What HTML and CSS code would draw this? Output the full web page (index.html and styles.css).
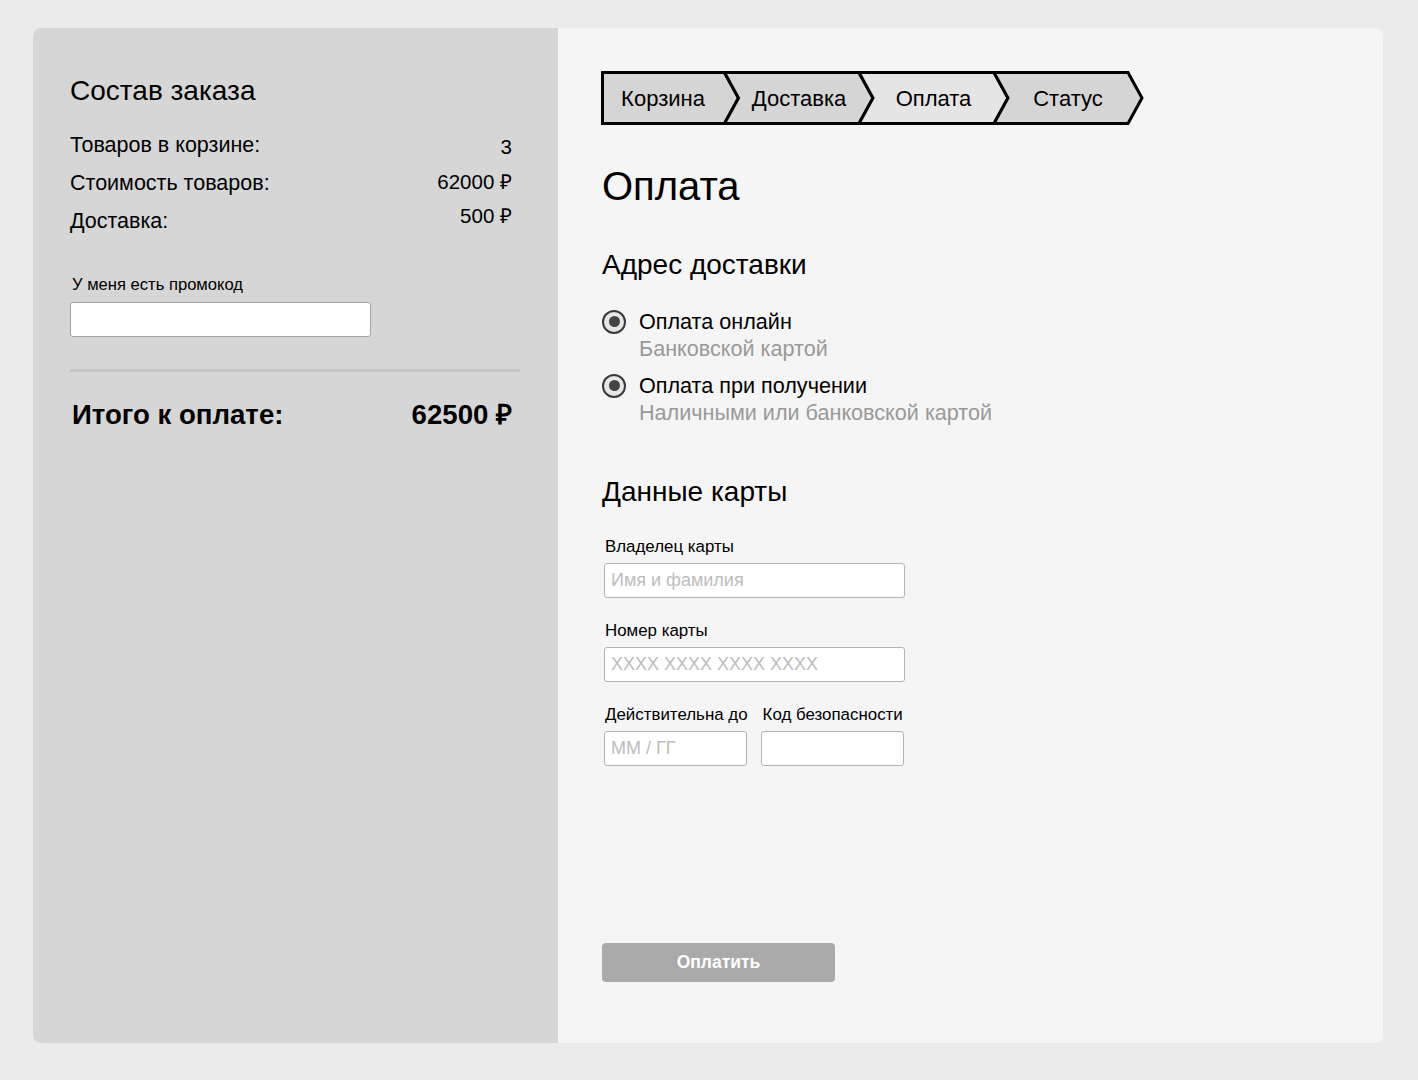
FILE: index.html
```html
<!DOCTYPE html>
<html lang="ru">
<head>
<meta charset="utf-8">
<title>Оплата</title>
<link rel="stylesheet" href="styles.css">
</head>
<body>
<div class="card">
  <aside class="summary">
    <h2 class="summary-title">Состав заказа</h2>
    <div class="summary-list">
      <div class="summary-labels">
        <div>Товаров в корзине:</div>
        <div>Стоимость товаров:</div>
        <div>Доставка:</div>
      </div>
      <div class="summary-values">
        <div>3</div>
        <div>62000 ₽</div>
        <div>500 ₽</div>
      </div>
    </div>
    <label class="promo-label">У меня есть промокод</label>
    <input class="input promo-input" type="text">
    <div class="divider"></div>
    <div class="total">
      <span>Итого к оплате:</span>
      <span>62500 ₽</span>
    </div>
  </aside>
  <main class="content">
    <svg class="steps" width="546" height="56" viewBox="0 0 546 56">
      <g stroke="#000" stroke-width="3" stroke-linejoin="miter">
        <polygon fill="#d5d5d5" points="2.5,2.5 124.5,2.5 138.5,28 124.5,53.5 2.5,53.5"/>
        <polygon fill="#d5d5d5" points="124.5,2.5 259,2.5 273,28 259,53.5 124.5,53.5 138.5,28"/>
        <polygon fill="#e5e5e5" points="259,2.5 394,2.5 408,28 394,53.5 259,53.5 273,28"/>
        <polygon fill="#d5d5d5" points="394,2.5 528,2.5 542,28 528,53.5 394,53.5 408,28"/>
      </g>
      <g class="steps-text" text-anchor="middle">
        <text x="63" y="35.5">Корзина</text>
        <text x="199" y="35.5">Доставка</text>
        <text x="333.5" y="35.5">Оплата</text>
        <text x="468" y="35.5">Статус</text>
      </g>
    </svg>
    <h1 class="page-title">Оплата</h1>
    <h2 class="section-title">Адрес доставки</h2>
    <div class="options">
      <div class="option">
        <span class="radio"></span>
        <div class="option-text">
          <div class="option-name">Оплата онлайн</div>
          <div class="option-sub">Банковской картой</div>
        </div>
      </div>
      <div class="option">
        <span class="radio"></span>
        <div class="option-text">
          <div class="option-name">Оплата при получении</div>
          <div class="option-sub">Наличными или банковской картой</div>
        </div>
      </div>
    </div>
    <h2 class="section-title card-title">Данные карты</h2>
    <div class="field">
      <label class="field-label">Владелец карты</label>
      <input class="input wide" type="text" placeholder="Имя и фамилия">
    </div>
    <div class="field">
      <label class="field-label">Номер карты</label>
      <input class="input wide" type="text" placeholder="XXXX XXXX XXXX XXXX">
    </div>
    <div class="field-row">
      <div class="field">
        <label class="field-label">Действительна до</label>
        <input class="input short" type="text" placeholder="ММ / ГГ">
      </div>
      <div class="field">
        <label class="field-label">Код безопасности</label>
        <input class="input short" type="text">
      </div>
    </div>
    <button class="pay">Оплатить</button>
  </main>
</div>
</body>
</html>
```

FILE: styles.css
```css
* { box-sizing: border-box; }
html, body { margin: 0; padding: 0; }
body {
  background: #ebebeb;
  font-family: "Liberation Sans", Arial, sans-serif;
  color: #000;
  padding: 28px 35px 37px 33px;
}
.card {
  display: flex;
  height: 1015px;
  border-radius: 8px;
  overflow: hidden;
  background: #f5f5f5;
}
.summary {
  width: 525px;
  flex: none;
  background: #d6d6d6;
  padding: 48px 46px 0 37px;
  display: flex;
  flex-direction: column;
  align-items: flex-start;
}
.summary-title {
  margin: 0;
  font-size: 28px;
  font-weight: normal;
  line-height: 30px;
}
.summary-list {
  margin-top: 20px;
  width: 100%;
  display: flex;
  justify-content: space-between;
  font-size: 21.5px;
}
.summary-labels { line-height: 38px; }
.summary-values { line-height: 34.5px; padding-top: 4px; text-align: right; font-size: 20.5px; }
.promo-label {
  margin-top: 35px;
  margin-left: 2px;
  font-size: 16.6px;
  line-height: 20px;
}
.input {
  display: block;
  height: 35px;
  background: #fff;
  border: 1px solid #b3b3b3;
  border-radius: 3px;
  font-family: "Liberation Sans", Arial, sans-serif;
  font-size: 18px;
  padding: 0 6px;
  outline: none;
}
.input::placeholder { color: #bdbdbd; }
.promo-input {
  margin-top: 7px;
  width: 301px;
  border-color: #a5a5a5;
}
.divider {
  margin-top: 32px;
  width: calc(100% + 8px);
  height: 3px;
  background: #c3c3c3;
}
.total {
  margin-top: 26px;
  width: 100%;
  display: flex;
  justify-content: space-between;
  font-size: 27.6px;
  font-weight: bold;
  line-height: 34px;
  padding-left: 2px;
}
.content {
  flex: 1;
  padding: 42px 0 61px 43px;
  display: flex;
  flex-direction: column;
  align-items: flex-start;
}
.steps { display: block; margin-left: -1px; }
.steps-text {
  font-family: "Liberation Sans", Arial, sans-serif;
  font-size: 22px;
  fill: #000;
}
.page-title {
  margin: 37px 0 0 1px;
  font-size: 40px;
  font-weight: normal;
  line-height: 46px;
}
.section-title {
  margin: 41px 0 0 1px;
  font-size: 28px;
  font-weight: normal;
  line-height: 30px;
}
.options {
  margin-top: 28px;
  display: flex;
  flex-direction: column;
  gap: 10px;
}
.option {
  display: flex;
  align-items: flex-start;
  gap: 13px;
}
.radio {
  flex: none;
  width: 24px;
  height: 24px;
  margin-top: 1.5px;
  margin-left: 1px;
  border-radius: 50%;
  border: 2px solid #3a3a3a;
  background: #e6e6e6;
  display: flex;
  align-items: center;
  justify-content: center;
}
.radio::after {
  content: "";
  width: 11px;
  height: 11px;
  border-radius: 50%;
  background: #444;
}
.option-text { font-size: 21.6px; line-height: 27px; }
.option-sub { color: #999; }
.card-title { margin-top: 51px; }
.field {
  display: flex;
  flex-direction: column;
  align-items: flex-start;
  margin-top: 23px;
}
.card-title + .field { margin-top: 30px; }
.field-label {
  margin-left: 4px;
  font-size: 16.9px;
  line-height: 20px;
  margin-bottom: 6px;
}
.wide { width: 301px; margin-left: 3px; }
.field-row { display: flex; gap: 13px; }
.short { width: 143px; margin-left: 3px; }
.field-row .field + .field .short { margin-left: 0; }
.field-row .field + .field .field-label { margin-left: 2px; }
.pay {
  margin-top: auto;
  margin-left: 1px;
  width: 233px;
  height: 39px;
  border: none;
  border-radius: 4px;
  background: #aaaaaa;
  color: #fff;
  font-family: "Liberation Sans", Arial, sans-serif;
  font-size: 17.5px;
  font-weight: bold;
}
```
